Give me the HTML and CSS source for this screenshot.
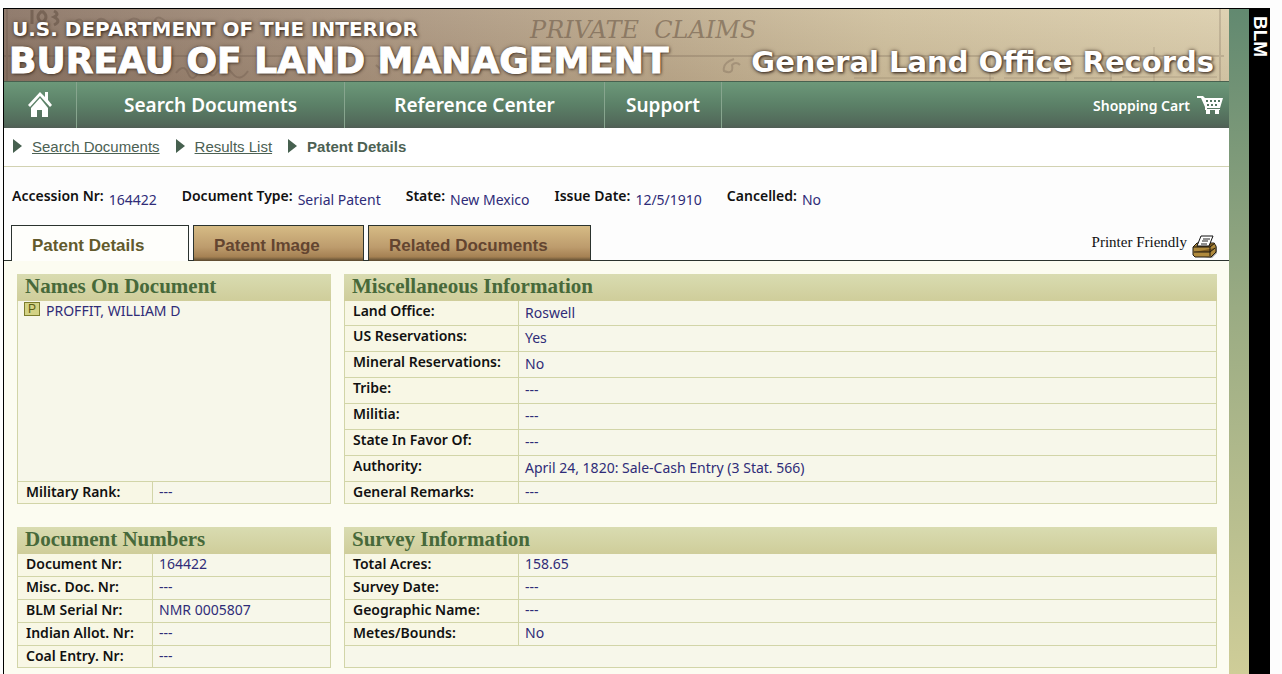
FILE: index.html
```html
<!DOCTYPE html>
<html lang="en">
<head>
  <meta charset="UTF-8" />
  <meta name="viewport" content="width=device-width, initial-scale=1.0"/>
  <title>Patent Details - BLM GLO Records</title>
  <link rel="stylesheet" href="styles.css">
</head>
<body>

<div class="frame">
  <div class="main">

    <header class="banner">
      <svg class="parchment" width="100%" height="72" aria-hidden="true">
        <g fill="none" stroke="#4d3b30" stroke-opacity="0.22">
          <path d="M0 47H1220M1216 0V72M3 0V72" stroke-width="2" stroke-opacity="0.18"/>
          <path d="M28 1v14M38 2q-8 6 0 12q8-6 0-12M50 2q6 3 0 6q8 4 0 8" stroke-width="3" stroke-opacity="0.4"/>
          <path d="M70 14q6-8 10 2t10 0 12-4 12 5 12-6 14 6 10-2 14 0M172 64q8-10 12 0t10 0 10-2 8 2q8-10 16 0t16-2M372 56q12 12 10-5M730 50q-12 4-10 12q10 4 8-6q4-4 8 0" stroke-width="2"/>
          <path d="M850 69h140M1000 69h55M1070 69h38M1118 68h95M1062 48v24M986 48v24M1107 48v24M1150 38v34"/>
        </g>
        <text class="old-script" x="526" y="29">PRIVATE&#160; CLAIMS</text>
      </svg>
      <div class="agency">
        <div class="department">U.S. DEPARTMENT OF THE INTERIOR</div>
        <div class="bureau">BUREAU OF LAND MANAGEMENT</div>
      </div>
      <div class="site-name">General Land Office Records</div>
    </header>

    <nav class="nav">
      <a class="home" href="#" aria-label="Home">
        <svg width="26" height="28" viewBox="0 0 26 28">
          <path fill="#fff" d="M13 1L1 14l2 2L13 5l10 11 2-2-4-5V1h-3v5zM13 7L4 17v9h6v-7h5v7h6v-9z"/>
        </svg>
      </a>
      <a class="search" href="#">Search Documents</a>
      <a class="reference" href="#">Reference Center</a>
      <a class="support" href="#">Support</a>
      <a class="cart" href="#">Shopping Cart
        <svg width="26" height="18" viewBox="0 0 26 18">
          <path fill="#fff" d="M0 0h6l2 2h18l-3 10H10v1h13v1H8v-3L4 2H0z"/>
          <path fill="#557763" d="M9 4h2v2H9zM13 4h2v2h-2zM17 4h2v2h-2zM21 4h2v2h-2zM10 8h2v2h-2zM14 8h2v2h-2zM18 8h2v2h-2z"/>
          <path fill="#fff" d="M9 14h4v4H9zM18 14h4v4h-4z"/>
        </svg>
      </a>
    </nav>

    <div class="crumbs">
      <span class="arrow"></span><a href="#">Search Documents</a>
      <span class="arrow"></span><a href="#">Results List</a>
      <span class="arrow"></span><strong>Patent Details</strong>
    </div>

    <dl class="summary">
      <div><dt>Accession Nr:</dt><dd>164422</dd></div>
      <div><dt>Document Type:</dt><dd>Serial Patent</dd></div>
      <div><dt>State:</dt><dd>New Mexico</dd></div>
      <div><dt>Issue Date:</dt><dd>12/5/1910</dd></div>
      <div><dt>Cancelled:</dt><dd>No</dd></div>
    </dl>

    <div class="tabs">
      <button class="tab details active">Patent Details</button>
      <button class="tab image">Patent Image</button>
      <button class="tab related">Related Documents</button>
      <a class="printer" href="#">Printer Friendly
        <svg width="26" height="24" viewBox="0 0 26 24">
          <path fill="#999" d="M4 21l16 2 5-5v-6l-2-1-4 9z"/>
          <path fill="#b08a3c" stroke="#211a10" d="M1 12l4-4h17l2 3v6l-5 5H3l-2-2z"/>
          <path fill="#7d5b20" stroke="#211a10" d="M1 12h17l5-4M18 12v9M2 17h16l5-4"/>
          <path fill="#fff" stroke="#111" d="M5 11l4-10h12l-4 10z"/>
          <path fill="none" stroke="#222" d="M11 4h7M10 6h6M9 9h6"/>
        </svg>
      </a>
    </div>

    <div class="content">
      <section class="panel names">
        <h2>Names On Document</h2>
        <div class="name-list"><span class="badge">P</span><a href="#">PROFFIT, WILLIAM D</a></div>
        <table>
          <tr><th scope="row">Military Rank:</th><td>---</td></tr>
        </table>
      </section>

      <section class="panel wide misc">
        <h2>Miscellaneous Information</h2>
        <table>
          <tr><th scope="row">Land Office:</th><td>Roswell</td></tr>
          <tr><th scope="row">US Reservations:</th><td>Yes</td></tr>
          <tr><th scope="row">Mineral Reservations:</th><td>No</td></tr>
          <tr><th scope="row">Tribe:</th><td>---</td></tr>
          <tr><th scope="row">Militia:</th><td>---</td></tr>
          <tr><th scope="row">State In Favor Of:</th><td>---</td></tr>
          <tr><th scope="row">Authority:</th><td>April 24, 1820: Sale-Cash Entry (3 Stat. 566)</td></tr>
          <tr><th scope="row">General Remarks:</th><td>---</td></tr>
        </table>
      </section>

      <section class="panel">
        <h2>Document Numbers</h2>
        <table>
          <tr><th scope="row">Document Nr:</th><td>164422</td></tr>
          <tr><th scope="row">Misc. Doc. Nr:</th><td>---</td></tr>
          <tr><th scope="row">BLM Serial Nr:</th><td>NMR 0005807</td></tr>
          <tr><th scope="row">Indian Allot. Nr:</th><td>---</td></tr>
          <tr><th scope="row">Coal Entry. Nr:</th><td>---</td></tr>
        </table>
      </section>

      <section class="panel wide">
        <h2>Survey Information</h2>
        <table>
          <tr><th scope="row">Total Acres:</th><td>158.65</td></tr>
          <tr><th scope="row">Survey Date:</th><td>---</td></tr>
          <tr><th scope="row">Geographic Name:</th><td>---</td></tr>
          <tr><th scope="row">Metes/Bounds:</th><td>No</td></tr>
          <tr><td class="blank" colspan="2"></td></tr>
        </table>
      </section>
    </div>
  </div>

  <div class="strip"></div>
  <aside class="blm">BLM</aside>
</div>

</body>
</html>
```
FILE: styles.css
```css
* {
  box-sizing: border-box;
}
body {
  margin: 8px 12px 0 3px;
  background: #fdfdfd;
  font-family: "Noto Sans", sans-serif;
  font-size: 14px;
  color: #111;
}
a {
  color: inherit;
  text-decoration: none;
}
.frame {
  display: flex;
  min-height: calc(100vh - 8px);
  border-top: 1px solid #000;
  border-left: 1px solid #000;
}
.main {
  flex: 1;
  min-width: 0;
}
.strip {
  width: 20px;
  background: linear-gradient(#628970, #9aab83 45%, #cfcd98);
}
.blm {
  width: 21px;
  padding-top: 7px;
  background: #000;
  color: #fff;
  font: bold 19px/19px "Liberation Sans", sans-serif;
  writing-mode: vertical-rl;
}

/* banner */
.banner {
  position: relative;
  display: flex;
  justify-content: space-between;
  align-items: flex-end;
  height: 72px;
  padding: 0 15px 0 5px;
  background: linear-gradient(rgba(255, 255, 255, 0.06), rgba(60, 30, 10, 0.08)),
    linear-gradient(90deg, #8b7566, #a8937e 28%, #bba88c 50%, #d0c19f 72%, #dccfae);
  font-family: "DejaVu Sans", sans-serif;
  font-weight: bold;
  color: #fff;
  text-shadow: 1px 1px 3px #3a2c22, 0 0 4px #5a4a3c;
  white-space: nowrap;
}
.parchment {
  position: absolute;
  top: 0;
  left: 0;
}
.old-script {
  font: italic 24px "DejaVu Serif", serif;
  fill: #6d5a48;
  fill-opacity: 0.6;
  text-shadow: none;
}
.agency, .site-name {
  position: relative;
}
.department {
  padding-left: 3px;
  font-size: 20px;
  line-height: 24px;
}
.bureau {
  font-size: 36px;
  line-height: 40px;
  -webkit-text-stroke: 1px #fff;
}
.site-name {
  font-size: 29px;
  line-height: 38px;
}

/* navigation */
.nav {
  display: flex;
  height: 47px;
  border-top: 1px solid #48614f;
  background: linear-gradient(#6c9879, #5b8067 50%, #52695a 90%, #505e55);
  color: #fff;
  font-size: 19px;
  font-weight: 600;
}
.nav a {
  display: flex;
  align-items: center;
  justify-content: center;
  border-right: 1px solid #87a58e;
}
.nav .home {
  width: 73px;
}
.nav .search {
  width: 268px;
}
.nav .reference {
  width: 260px;
}
.nav .support {
  width: 117px;
}
.nav .cart {
  gap: 7px;
  margin-left: auto;
  padding-right: 6px;
  border: 0;
  font-size: 14px;
}

.crumbs {
  display: flex;
  align-items: center;
  height: 39px;
  padding: 0 0 2px 9px;
  border-bottom: 1px solid #d2d2b2;
  background: #fff;
  color: #4c6153;
  font-family: "Liberation Sans", sans-serif;
  font-size: 15px;
}
.crumbs a {
  margin-right: 16px;
  text-decoration: underline;
}
.arrow {
  margin-right: 10px;
  border-left: 9px solid #46604f;
  border-top: 7px solid transparent;
  border-bottom: 7px solid transparent;
}

.summary {
  display: flex;
  gap: 25px;
  height: 58px;
  margin: 0;
  padding: 19px 8px 0;
}
.summary div {
  display: flex;
  gap: 5px;
}
dt {
  font-weight: 600;
  line-height: 20px;
}
dd {
  margin: 0;
  color: #2f2c78;
  line-height: 28px;
}

/* tabs */
.tabs {
  display: flex;
  gap: 4px;
  height: 36px;
  padding-left: 7px;
  border-bottom: 1px solid #2b332f;
}
.tab {
  height: 36px;
  padding: 4px 20px 0;
  border: 1px solid #2b332f;
  border-bottom: 0;
  background: linear-gradient(#d6bb85, #bd9c6d 60%, #a58153 88%, #59492f);
  color: #634530;
  font: bold 17px "Liberation Sans", sans-serif;
  text-align: left;
}
.tab.active {
  background: #fefefb;
  color: #625a2c;
}
.details {
  width: 178px;
}
.image {
  width: 171px;
}
.related {
  width: 223px;
}
.printer {
  display: flex;
  align-items: center;
  gap: 5px;
  margin-left: auto;
  padding-right: 11px;
  font-family: "Liberation Serif", serif;
  font-size: 15px;
}
.printer svg {
  margin-top: 8px;
}

/* detail panels */
.content {
  display: grid;
  grid-template-columns: 314px 1fr;
  gap: 23px 13px;
  padding: 13px 12px 6px 13px;
  background: #fcfcf1;
}
.panel {
  display: flex;
  flex-direction: column;
  border: 1px solid #d2d5a8;
  border-top: 0;
  background: #f7f7ea;
}
h2 {
  height: 27px;
  margin: 0 -1px;
  padding-left: 8px;
  background: linear-gradient(#d9dcb1, #cfcd9a);
  color: #47693a;
  font: bold 21px/25px "Liberation Serif", serif;
}
.name-list {
  display: flex;
  flex: 1;
  gap: 6px;
  align-items: flex-start;
  padding-left: 6px;
  color: #2f2c78;
  line-height: 20px;
}
.badge {
  width: 16px;
  height: 14px;
  margin-top: 1px;
  border: 1px solid #7c7d2c;
  background: #d3d284;
  color: #5b5d14;
  font: 12px/12px "Liberation Sans", sans-serif;
  text-align: center;
}
table {
  width: 100%;
  border-collapse: separate;
  border-spacing: 0;
  table-layout: fixed;
}
tr {
  height: 23px;
}
tr:first-child, tr:last-child {
  height: 22px;
}
th, td {
  padding: 0 8px;
  border-top: 1px solid #d2d5a8;
  line-height: 20px;
  text-align: left;
  vertical-align: top;
  white-space: nowrap;
}
tr:first-child > * {
  border-top: 0;
}
.names tr > * {
  border-top: 1px solid #d2d5a8;
}
th {
  width: 135px;
  border-right: 1px solid #d2d5a8;
  background: #f8f7e5;
  font-weight: 600;
}
td {
  padding-left: 6px;
  color: #2f2c78;
}
.wide th {
  width: 174px;
}
.misc tr {
  height: 26px;
}
.misc tr:first-child {
  height: 24px;
}
.misc tr:last-child {
  height: 22px;
}
.misc td {
  line-height: 24px;
}
.misc tr:last-child td {
  line-height: 20px;
}
```
